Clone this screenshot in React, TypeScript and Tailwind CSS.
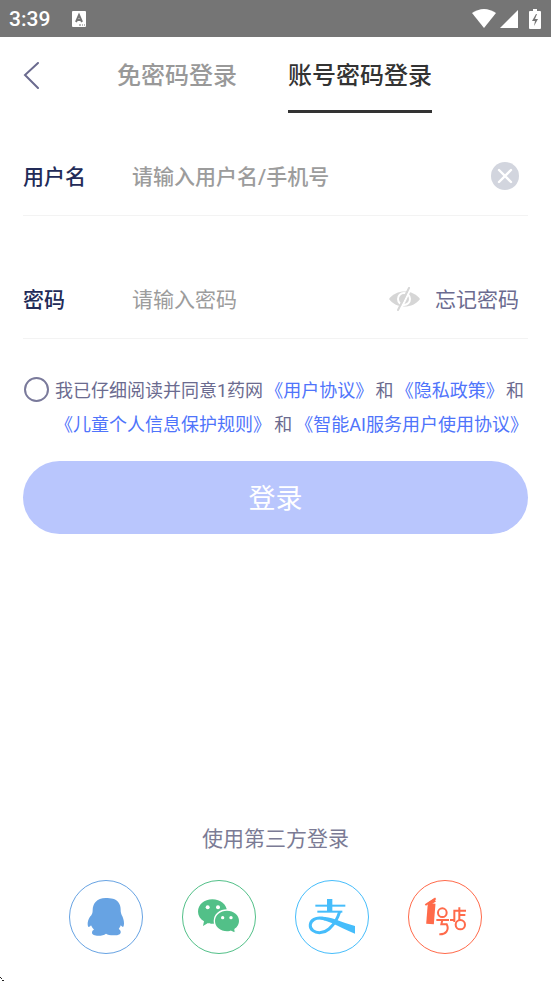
import type { ReactNode } from "react";

const agreementLink = "text-[#4f74fb]";

const providers: { name: string; className: string; icon: ReactNode }[] = [
  { name: "QQ", className: "border-[#67a3e3] text-[#67a3e3]", icon: <QQIcon /> },
  { name: "微信", className: "border-[#52c088] text-[#52c088]", icon: <WeChatIcon /> },
  { name: "支付宝", className: "border-[#46bdfb] text-[#46bdfb]", icon: <AlipayIcon /> },
  { name: "1号店", className: "border-[#ff6a4a] text-[#ff6a4a]", icon: <YhdIcon /> },
];

function QQIcon() {
  return (
    <svg viewBox="30 33 216 216" className="size-full" fill="currentColor" aria-hidden="true">
      <path d="M137 84C153 84 167 86 175 97C180 104 182 111 182 120C182 126 183 130 185 135C189 142 192 151 192 160C192 166 191 170 189 171C187 171 184 168 182 166C181 171 178 174 176 177C181 180 183 184 182 188C180 195 170 196 160 196C150 196 143 194 138 191C132 195 125 197 115 197C104 197 96 194 96 188C96 183 98 180 102 179C98 175 95 171 93 166C91 169 88 171 86 171C83 170 83 165 83 159C84 150 88 142 94 136C97 131 98 127 98 120C98 111 101 103 106 97C114 87 124 84 137 84Z" />
    </svg>
  );
}

function WeChatIcon() {
  return (
    <svg viewBox="39 33 216 216" className="size-full" fill="currentColor" aria-hidden="true">
      <path d="M127 88C151 88 171 104 171 125C171 146 151 161 127 161C122 161 118 161 114 159L99 168L102 154C91 147 84 137 84 125C84 104 103 88 127 88Z" />
      <circle cx="113" cy="112" r="6" fill="#fff" />
      <circle cx="144" cy="112" r="6" fill="#fff" />
      <path
        d="M171 120C192 120 209 134 209 153C209 164 204 172 195 178L196 190L182 184C179 185 175 186 171 186C150 186 133 172 133 153C133 134 150 120 171 120Z"
        stroke="#fff"
        strokeWidth="4"
      />
      <circle cx="158" cy="143" r="5" fill="#fff" />
      <circle cx="183" cy="143" r="5" fill="#fff" />
    </svg>
  );
}

function AlipayIcon() {
  return (
    <svg viewBox="33 33 216 216" className="size-full" fill="none" stroke="currentColor" aria-hidden="true">
      <path d="M91 107H181" strokeWidth="6" />
      <path d="M134 87V125" strokeWidth="16" />
      <path d="M97 125H172" strokeWidth="6" />
      <path d="M164 125C158 146 147 164 132 177C117 190 96 191 84 182C72 173 73 156 87 148C97 142 110 143 122 147" strokeWidth="9" />
      <path
        d="M84 148C102 135 127 140 150 148C172 156 190 163 210 168V191C184 181 161 168 140 159C119 150 100 144 84 148Z"
        fill="currentColor"
        stroke="none"
      />
    </svg>
  );
}

function YhdIcon() {
  return (
    <svg viewBox="42 33 216 216" className="size-full" fill="none" stroke="currentColor" aria-hidden="true">
      <path d="M110 100L105 162" strokeWidth="23" />
      <path d="M91 105L122 85" strokeWidth="6" />
      <path d="M100 103L120 90" strokeWidth="10" />
      <circle cx="142" cy="128" r="13" strokeWidth="6" />
      <path d="M124 150H162M142 150L139 163H155C164 180 152 194 133 193" strokeWidth="6" />
      <path d="M165 150H178M178 156V122H213M193 112V151M193 135H211" strokeWidth="6" />
      <circle cx="196" cy="164" r="14" strokeWidth="6" />
    </svg>
  );
}

function StatusBar() {
  return (
    <div className="flex h-[37px] items-center bg-[#757575] pr-[10px] pl-[9px] text-white">
      <span className="pt-0.5 font-[Roboto] text-[21px] font-medium">3:39</span>
      <svg viewBox="0 0 14 16" className="ml-[22px] h-4 w-[14px]" aria-hidden="true">
        <rect width="14" height="16" rx="1" fill="#fff" />
        <path d="M4 11L7 4L10 11M5 9H9" fill="none" stroke="#757575" strokeWidth="2" />
        <path d="M7 14H9M10 14H11M12 14H13" stroke="#757575" />
      </svg>
      <svg viewBox="0 0 24 19" className="ml-auto h-[19px] w-6" fill="currentColor" aria-hidden="true">
        <path d="M12 0C16 0 21 2 24 4L12 19L0 4C3 2 8 0 12 0Z" />
      </svg>
      <svg viewBox="0 0 18 18" className="ml-1 size-[18px]" fill="currentColor" aria-hidden="true">
        <path d="M18 0V18H0Z" />
      </svg>
      <svg viewBox="0 0 12 20" className="ml-[11px] h-5 w-3" aria-hidden="true">
        <path d="M4 0H8V2H11Q12 2 12 3V19Q12 20 11 20H1Q0 20 0 19V3Q0 2 1 2H4Z" fill="#fff" />
        <path d="M7 5L3 12H6L5 17L9 10H6L8 5Z" fill="#757575" />
      </svg>
    </div>
  );
}

function Header() {
  return (
    <header className="flex h-[76px] items-stretch pl-[23px] text-2xl font-medium">
      <button type="button" aria-label="返回" className="w-[94px]">
        <svg viewBox="0 0 16 27" className="h-[27px] w-4" fill="none" stroke="#6b6b8f" strokeWidth="2" aria-hidden="true">
          <path d="M15 1L2 13L15 26" strokeLinecap="round" />
        </svg>
      </button>
      <nav className="flex gap-[51px]">
        <button type="button" className="border-b-3 border-transparent pt-1 text-[#999]">
          免密码登录
        </button>
        <button type="button" className="border-b-3 border-[#333] pt-1 text-[#333]">
          账号密码登录
        </button>
      </nav>
    </header>
  );
}

function LoginForm() {
  return (
    <form className="mx-[23px] mt-6 text-[21px]" onSubmit={(e) => e.preventDefault()}>
      <div className="flex h-[79px] items-center border-b border-[#f3f3f3] pr-[9px]">
        <label htmlFor="username" className="w-[109px] pt-[3px] font-medium text-[#222b58]">
          用户名
        </label>
        <input
          id="username"
          type="text"
          placeholder="请输入用户名/手机号"
          className="min-w-0 flex-1 pt-[3px] font-medium outline-none placeholder:text-[#9c9c9c]"
        />
        <button type="button" aria-label="清除">
          <svg viewBox="0 0 28 28" className="size-7" aria-hidden="true">
            <circle cx="14" cy="14" r="14" fill="#d2d5de" />
            <path d="M8 8L20 20M20 8L8 20" stroke="#fff" strokeWidth="2.4" strokeLinecap="round" />
          </svg>
        </button>
      </div>

      <div className="mt-11 flex h-[79px] items-center border-b border-[#f3f3f3] pr-[9px]">
        <label htmlFor="password" className="w-[109px] pt-[3px] font-medium text-[#222b58]">
          密码
        </label>
        <input
          id="password"
          type="password"
          placeholder="请输入密码"
          className="min-w-0 flex-1 pt-[3px] outline-none placeholder:text-[#9c9c9c]"
        />
        <button type="button" aria-label="显示密码">
          <svg viewBox="0 0 31 24" className="h-6 w-[31px]" aria-hidden="true">
            <path d="M0 12C7 2 24 2 31 12C24 22 7 22 0 12Z" fill="#d6d6d6" />
            <circle cx="15" cy="12" r="6" fill="none" stroke="#fff" strokeWidth="2" />
            <path d="M22 1L11 24" stroke="#fff" strokeWidth="2" />
            <path d="M20 1L9 23" stroke="#d6d6d6" strokeWidth="2" strokeLinecap="round" />
          </svg>
        </button>
        <a href="#forgot" className="ml-[15px] pt-[3px] text-[#6b6b8f]">
          忘记密码
        </a>
      </div>

      <div className="mt-[35px] flex items-start gap-[6px] text-lg leading-[34px] text-[#6b6b8f]">
        <input
          id="agree"
          type="checkbox"
          aria-label="我已仔细阅读并同意"
          className="mt-[3px] ml-px size-[25px] shrink-0 appearance-none rounded-full border-2 border-[#7a7a9b] checked:bg-[#7a7a9b]"
        />
        <div className="flex-1 whitespace-nowrap">
          <div className="flex justify-between pr-1">
            <label htmlFor="agree">我已仔细阅读并同意1药网</label>
            <a href="#user" className={agreementLink}>《用户协议》</a>
            <span>和</span>
            <a href="#privacy" className={agreementLink}>《隐私政策》</a>
            <span>和</span>
          </div>
          <div className="flex justify-between">
            <a href="#children" className={agreementLink}>《儿童个人信息保护规则》</a>
            <span>和</span>
            <a href="#ai" className={agreementLink}>《智能AI服务用户使用协议》</a>
          </div>
        </div>
      </div>

      <button type="submit" className="mt-[19px] h-[73px] w-full rounded-full bg-[#b9c6fd] pt-[3px] text-[27px] text-white">
        登录
      </button>
    </form>
  );
}

export default function App() {
  return (
    <div className="relative flex min-h-screen flex-col bg-white font-[Roboto,'Noto_Sans_CJK_SC',sans-serif]">
      <StatusBar />
      <Header />
      <LoginForm />
      <section className="mt-auto flex flex-col items-center gap-[25px] pb-[27px]">
        <h2 className="text-[21px] leading-8 text-[#7b7b95]">使用第三方登录</h2>
        <div className="flex gap-[39px]">
          {providers.map(({ name, className, icon }) => (
            <button key={name} type="button" aria-label={name} className={`size-[74px] rounded-full border ${className}`}>
              {icon}
            </button>
          ))}
        </div>
      </section>
      <svg viewBox="0 0 4 4" className="absolute bottom-0 left-0 size-1" aria-hidden="true">
        <path d="M0 0H1V1H2V2H1V1H0ZM2 3H4V4H2Z" fill="#222" />
      </svg>
    </div>
  );
}
